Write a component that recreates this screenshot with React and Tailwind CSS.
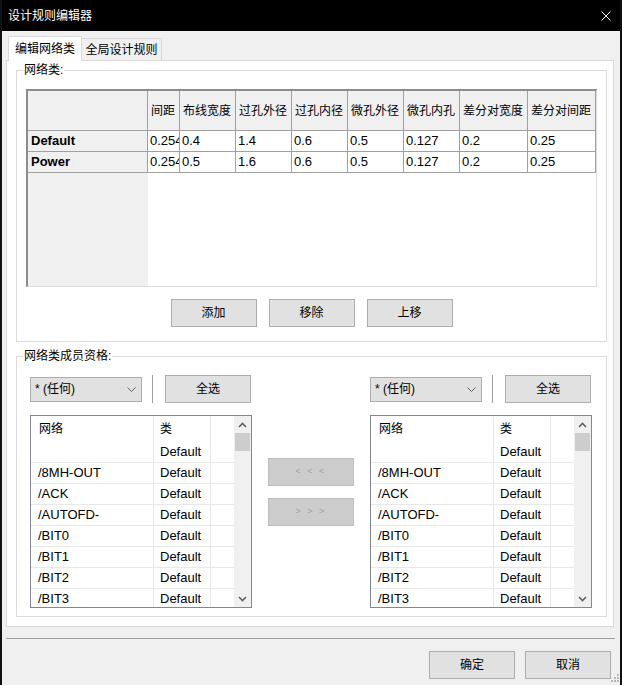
import React from 'react';

const headerCols = [
  { label: '间距', w: 'w-[32px]' },
  { label: '布线宽度', w: 'w-[56px]' },
  { label: '过孔外径', w: 'w-[56px]' },
  { label: '过孔内径', w: 'w-[56px]' },
  { label: '微孔外径', w: 'w-[56px]' },
  { label: '微孔内孔', w: 'w-[56px]' },
  { label: '差分对宽度', w: 'w-[68px]' },
  { label: '差分对间距', w: 'w-[68px]' },
];

const classRows = [
  { name: 'Default', values: ['0.254', '0.4', '1.4', '0.6', '0.5', '0.127', '0.2', '0.25'] },
  { name: 'Power', values: ['0.254', '0.5', '1.6', '0.6', '0.5', '0.127', '0.2', '0.25'] },
];

const nets = ['', '/8MH-OUT', '/ACK', '/AUTOFD-', '/BIT0', '/BIT1', '/BIT2', '/BIT3'];

function SmallChevron({ up }) {
  return (
    <svg width="9" height="6" viewBox="0 0 9 6">
      <path
        d={up ? 'M1 5 L4.5 1.5 L8 5' : 'M1 1 L4.5 4.5 L8 1'}
        fill="none"
        stroke="#606060"
        strokeWidth="1.6"
      />
    </svg>
  );
}

function Button({ children, className = '' }) {
  return (
    <div className={`w-[86px] h-[28px] border border-[#adadad] bg-[#e1e1e1] flex items-center justify-center text-[12px] ${className}`}>
      {children}
    </div>
  );
}

function ClassTable() {
  return (
    <div className="w-[571px] h-[198px] flex flex-col bg-white border-t-2 border-l-2 border-r border-b border-[#8c8c8c] border-r-[#dcdcdc] border-b-[#dcdcdc]">
      <div className="flex h-[40px] shrink-0">
        <div className="w-[120px] bg-[#f0f0f0] border-r border-b border-[#a0a0a0]" />
        {headerCols.map((c) => (
          <div
            key={c.label}
            className={`${c.w} bg-[#f0f0f0] border-r border-b border-[#a0a0a0] flex items-center pl-[3px] text-[12px] whitespace-nowrap overflow-hidden`}
          >
            {c.label}
          </div>
        ))}
      </div>
      {classRows.map((r) => (
        <div key={r.name} className="flex h-[21px] shrink-0">
          <div className="w-[120px] bg-[#f0f0f0] border-r border-b border-[#a0a0a0] flex items-center pl-[3px] text-[13px] font-bold">
            {r.name}
          </div>
          {r.values.map((v, i) => (
            <div
              key={i}
              className={`${headerCols[i].w} border-r border-b border-[#a0a0a0] flex items-center pl-[2px] text-[13px] whitespace-nowrap overflow-hidden`}
            >
              {v}
            </div>
          ))}
        </div>
      ))}
      <div className="flex flex-1">
        <div className="w-[120px] bg-[#f0f0f0]" />
        <div className="flex-1 bg-white" />
      </div>
    </div>
  );
}

function Combo() {
  return (
    <div className="w-[112px] h-[25px] border border-[#adadad] bg-[#e1e1e1] flex items-center justify-between pl-[4px] pr-[5px] text-[12px]">
      <span>* (任何)</span>
      <svg width="9" height="5" viewBox="0 0 9 5">
        <path d="M0.5 0.5 L4.5 4.5 L8.5 0.5" fill="none" stroke="#606060" strokeWidth="1" />
      </svg>
    </div>
  );
}

function NetList() {
  return (
    <div className="mt-[12px] w-[222px] h-[193px] border border-[#828790] bg-white flex overflow-hidden">
      <div className="flex-1 flex flex-col overflow-hidden">
        <div className="flex h-[26px] shrink-0 text-[12px]">
          <div className="w-[123px] border-r border-[#e5e5e5] pl-[8px] flex items-center">网络</div>
          <div className="w-[57px] border-r border-[#e5e5e5] pl-[6px] flex items-center">类</div>
          <div className="w-[22px]" />
        </div>
        {nets.map((n, i) => (
          <div key={i} className="flex h-[21px] shrink-0 border-b border-[#e8e8e8] text-[13px]">
            <div className="w-[123px] border-r border-[#e5e5e5] pl-[7px] flex items-center">{n}</div>
            <div className="w-[57px] border-r border-[#e5e5e5] pl-[6px] flex items-center">Default</div>
            <div className="w-[22px]" />
          </div>
        ))}
      </div>
      <div className="w-[17px] bg-[#f0f0f0] flex flex-col shrink-0">
        <div className="h-[17px] flex items-center justify-center">
          <SmallChevron up />
        </div>
        <div className="h-[18px] mx-[1px] bg-[#cdcdcd]" />
        <div className="flex-1" />
        <div className="h-[17px] flex items-center justify-center">
          <SmallChevron />
        </div>
      </div>
    </div>
  );
}

function MemberColumn() {
  return (
    <div className="w-[222px] flex flex-col">
      <div className="flex items-center h-[28px]">
        <Combo />
        <div className="ml-[10px] w-px h-[28px] bg-[#a0a0a0]" />
        <Button className="ml-[12px] h-[27px]">全选</Button>
      </div>
      <NetList />
    </div>
  );
}

export default function App() {
  return (
    <div className="relative w-[622px] h-[685px] overflow-hidden bg-[#f0f0f0] border-x-2 border-[#111111] text-black font-[family-name:'Liberation_Sans','Noto_Sans_CJK_SC',sans-serif]">
      {/* title bar */}
      <div className="h-[31px] bg-black flex items-center justify-between pl-[6px] pr-[9px]">
        <span className="text-white text-[12px]">设计规则编辑器</span>
        <svg width="10" height="10" viewBox="0 0 10 10">
          <path d="M0.5 0.5 L9.5 9.5 M9.5 0.5 L0.5 9.5" stroke="#ffffff" strokeWidth="1" />
        </svg>
      </div>

      {/* tabs */}
      <div className="mt-[5px] ml-[6px] h-[24px] flex items-end">
        <div className="relative z-10 w-[74px] h-[25px] -mb-px bg-white border-x border-t border-[#d9d9d9] flex items-center justify-center text-[12px]">
          编辑网络类
        </div>
        <div className="-ml-px w-[81px] h-[22px] border-x border-t border-[#d9d9d9] flex items-center justify-center text-[12px]">
          全局设计规则
        </div>
      </div>

      {/* tab panel */}
      <div className="ml-[4px] mr-[6px] border border-[#d9d9d9] bg-white pt-[1px] pl-[9px] pr-[6px] pb-[9px]">
        <fieldset className="border border-[#dcdcdc]">
          <legend className="ml-[6px] px-[1px] text-[12px] leading-[16px]">网络类:</legend>
          <div className="pt-[11px] px-[9px] pb-[14px] flex flex-col">
            <ClassTable />
            <div className="mt-[12px] flex justify-center gap-[12px]">
              <Button className="w-[85px]">添加</Button>
              <Button className="w-[85px]">移除</Button>
              <Button className="w-[85px]">上移</Button>
            </div>
          </div>
        </fieldset>

        <fieldset className="mt-[6px] border border-[#dcdcdc]">
          <legend className="ml-[6px] px-[1px] text-[12px] leading-[16px]">网络类成员资格:</legend>
          <div className="pt-[11px] pl-[13px] pr-[14px] pb-[8px] flex">
            <MemberColumn />
            <div className="w-[118px] pl-[16px] pt-[83px] flex flex-col gap-[12px]">
              <div className="w-[86px] h-[28px] border border-[#bfbfbf] bg-[#cccccc] flex items-center justify-center text-[9px] text-[#a0a0a0] tracking-[2px]">
                &lt; &lt; &lt;
              </div>
              <div className="w-[86px] h-[28px] border border-[#bfbfbf] bg-[#cccccc] flex items-center justify-center text-[9px] text-[#a0a0a0] tracking-[2px]">
                &gt; &gt; &gt;
              </div>
            </div>
            <MemberColumn />
          </div>
        </fieldset>
      </div>

      <div className="mt-[11px] ml-[4px] mr-[5px] h-px bg-[#a0a0a0]" />

      <div className="mt-[12px] flex justify-end gap-[10px] pr-[9px]">
        <Button>确定</Button>
        <Button>取消</Button>
      </div>

      {/* resize grip */}
      <svg className="absolute right-0 bottom-[2px]" width="10" height="10" viewBox="0 0 10 10">
        <rect x="7" y="1" width="2" height="2" fill="#b8b8b8" />
        <rect x="4" y="4" width="2" height="2" fill="#b8b8b8" />
        <rect x="7" y="4" width="2" height="2" fill="#b8b8b8" />
        <rect x="1" y="7" width="2" height="2" fill="#b8b8b8" />
        <rect x="4" y="7" width="2" height="2" fill="#b8b8b8" />
        <rect x="7" y="7" width="2" height="2" fill="#b8b8b8" />
      </svg>
    </div>
  );
}
